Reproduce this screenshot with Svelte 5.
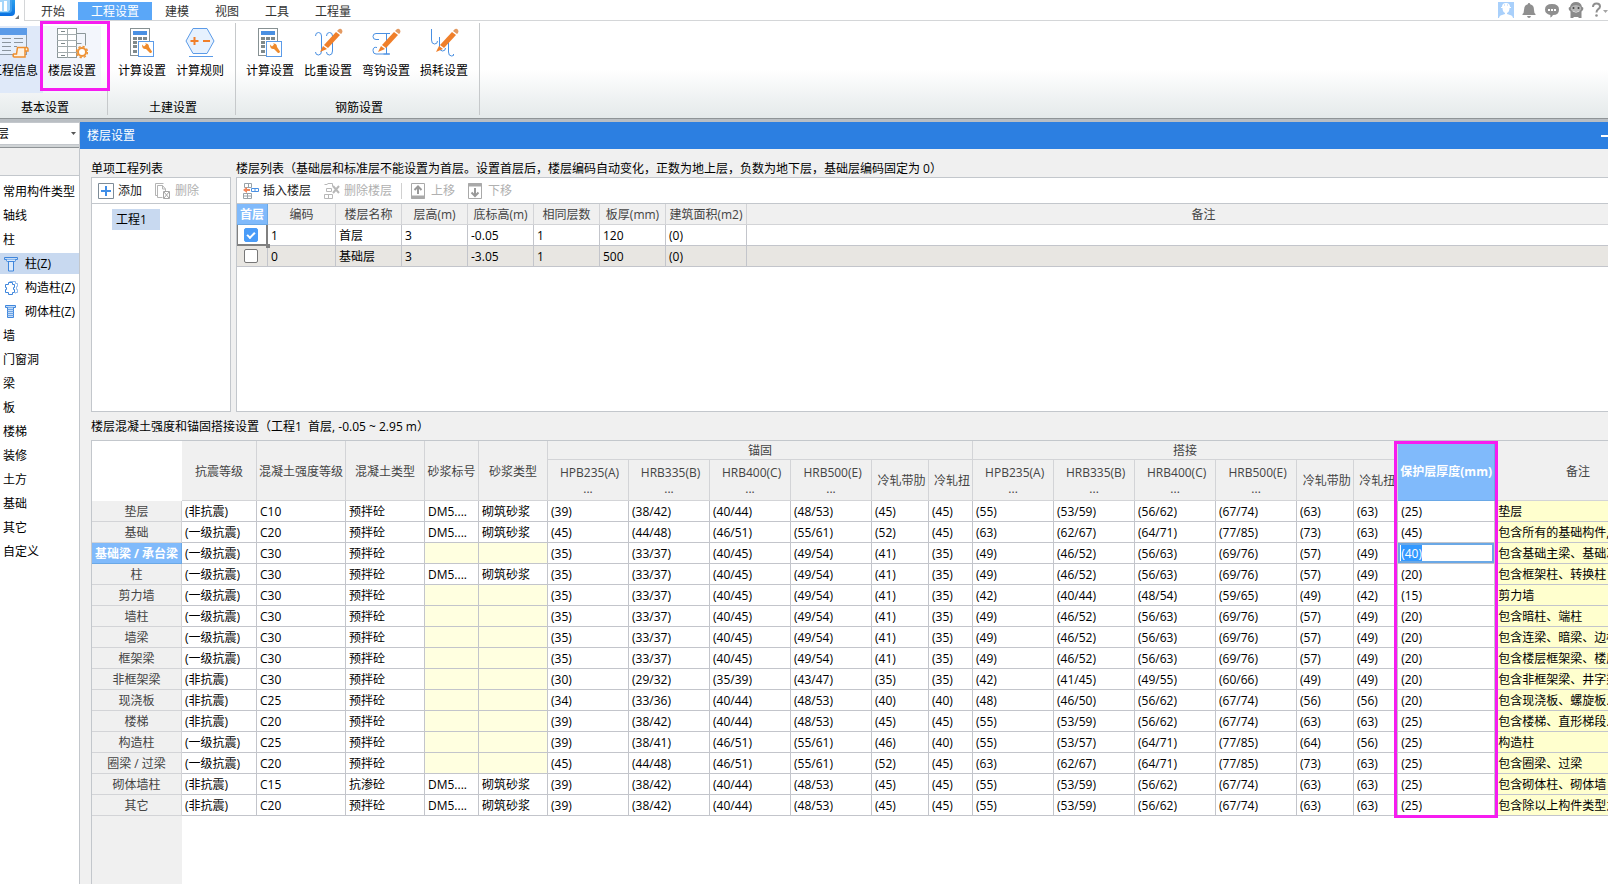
<script>
import { onMount } from 'svelte';

const tabs = ['开始', '工程设置', '建模', '视图', '工具', '工程量']

const groups = [
  { name: '基本设置', items: [['info', '工程信息'], ['floor', '楼层设置']] },
  { name: '土建设置', items: [['calc', '计算设置'], ['rule', '计算规则']] },
  { name: '钢筋设置', items: [['calc', '计算设置'], ['weight', '比重设置'], ['hook', '弯钩设置'], ['loss', '损耗设置']] },
]

const parts = [
  ['常用构件类型'], ['轴线'], ['柱'], ['柱(Z)', 'col'], ['构造柱(Z)', 'tie'], ['砌体柱(Z)', 'brick'],
  ['墙'], ['门窗洞'], ['梁'], ['板'], ['楼梯'], ['装修'], ['土方'], ['基础'], ['其它'], ['自定义'],
]

const floorHead = ['编码', '楼层名称', '层高(m)', '底标高(m)', '相同层数', '板厚(mm)', '建筑面积(m2)', '备注']
let floors = [
  { first: true, cells: ['1', '首层', '3', '-0.05', '1', '120', '(0)', ''] },
  { first: false, cells: ['0', '基础层', '3', '-3.05', '1', '500', '(0)', ''] },
]

const heads = ['抗震等级', '混凝土强度等级', '混凝土类型', '砂浆标号', '砂浆类型']
const bars = ['HPB235(A)', 'HRB335(B)', 'HRB400(C)', 'HRB500(E)', '冷轧带肋', '冷轧扭']
const widths = [90, 75, 89, 79, 54, 69, 81, 81, 81, 81, 57, 44, 81, 81, 81, 81, 57, 44, 97]

const A = '(非抗震)'
const B = '(一级抗震)'
const c30 = '35 33/37 40/45 49/54 41 35 49 46/52 56/63 69/76 57 49'
const c20 = '39 38/42 40/44 48/53 45 45 55 53/59 56/62 67/74 63 63'
const c20k = '45 44/48 46/51 55/61 52 45 63 62/67 64/71 77/85 73 63'

// name, seismic, grade, concrete, has mortar, lengths, cover, remark
const data = [
  ['垫层', A, 'C10', '预拌砼', 1, c20, 25, '垫层'],
  ['基础', B, 'C20', '预拌砼', 1, c20k, 45, '包含所有的基础构件, 不含基础梁'],
  ['基础梁 / 承台梁', B, 'C30', '预拌砼', 0, c30, 40, '包含基础主梁、基础次梁'],
  ['柱', B, 'C30', '预拌砼', 1, c30, 20, '包含框架柱、转换柱'],
  ['剪力墙', B, 'C30', '预拌砼', 0, '35 33/37 40/45 49/54 41 35 42 40/44 48/54 59/65 49 42', 15, '剪力墙'],
  ['墙柱', B, 'C30', '预拌砼', 0, c30, 20, '包含暗柱、端柱'],
  ['墙梁', B, 'C30', '预拌砼', 0, c30, 20, '包含连梁、暗梁、边框梁'],
  ['框架梁', B, 'C30', '预拌砼', 0, c30, 20, '包含楼层框架梁、楼层框支梁'],
  ['非框架梁', A, 'C30', '预拌砼', 0, '30 29/32 35/39 43/47 35 35 42 41/45 49/55 60/66 49 49', 20, '包含非框架梁、井字梁'],
  ['现浇板', A, 'C25', '预拌砼', 0, '34 33/36 40/44 48/53 40 40 48 46/50 56/62 67/74 56 56', 20, '包含现浇板、螺旋板...'],
  ['楼梯', A, 'C20', '预拌砼', 0, c20, 25, '包含楼梯、直形梯段...'],
  ['构造柱', B, 'C25', '预拌砼', 0, '39 38/41 46/51 55/61 46 40 55 53/57 64/71 77/85 64 56', 25, '构造柱'],
  ['圈梁 / 过梁', B, 'C20', '预拌砼', 0, c20k, 25, '包含圈梁、过梁'],
  ['砌体墙柱', A, 'C15', '抗渗砼', 1, c20, 25, '包含砌体柱、砌体墙'],
  ['其它', A, 'C20', '预拌砼', 1, c20, 25, '包含除以上构件类型之外'],
]

let cover = '(40)'
let edit

onMount(() => {
  edit.focus({ preventScroll: true })
  edit.select()
})
</script>

{#snippet pencil()}
  <path d="M12 18 L24 5 L28 8 L16 21 Z" fill="#f07f2a" />
  <path d="M25 4 L27 2 Q29 1 30 3 Q31 4 30 6 L29 7 Z" fill="#e39a62" />
  <path d="M11 19 L15 22 L8 25 Z" fill="#f07f2a" />
{/snippet}

{#snippet icon(name)}
  <svg class="big" viewBox="0 0 32 32" aria-hidden="true">
    {#if name === 'info'}
      <rect x="1.500" y="1.500" width="27" height="26" fill="#e6effc" stroke="#8e9aa6" />
      <rect x="1" y="1" width="28" height="7" fill="#5b9be8" />
      <path d="M4 11.500h9M4 15.500h9M4 19.500h9M4 23.500h9M16 11.500h9M16 15.500h9M16 19.500h3" stroke="#8b959e" />
      <path d="M19.500 20.500h9q1.500 0 1.500 2v1.500h-3v6h-11q-1.500-1-.5-3h3zM27 24v-3" fill="#fdf3e4" stroke="#ee8e2e" stroke-width="1.500" />
    {:else if name === 'floor'}
      <path d="M20.500 6.500h9v12M20.500 16.500h5" fill="none" stroke="#8c9799" />
      <rect x="1.500" y="1.500" width="19" height="29" fill="#fff" stroke="#8c9799" />
      <path d="M1 7.500h20M1 13.500h20M1 19.500h20M1 25.500h20M11.500 1v30" stroke="#a3acae" />
      <path d="M5 4.500h4M5 16.500h4M5 28.500h4" stroke="#7c8789" />
      <circle cx="26" cy="25" r="4" fill="#fff" stroke="#ee9337" stroke-width="2" />
      <circle cx="26" cy="25" r="5.500" fill="none" stroke="#ee9337" stroke-width="1.500" stroke-dasharray="2.300 2" />
    {:else if name === 'calc'}
      <rect x="4.500" y="1.500" width="19" height="27" fill="#fff" stroke="#879193" />
      <rect x="7" y="4" width="14" height="4" fill="#4a90e2" />
      <path d="M7 11.500h4M12 11.500h4M17 11.500h4M7 15.500h4M12 15.500h4M17 15.500h4M7 19.500h4M7 24.500h4" stroke="#7f898b" stroke-width="3" />
      <rect x="12.500" y="14.500" width="15" height="15" fill="#fff" stroke="#5b9be8" />
      <path d="M16 17.500l2 2 2-2-1-1q4-.5 4 3.500l3 4.500q-.5 2-2 1.500l-4-4q-4 .5-4-4.500z" fill="#ee8a2c" />
    {:else if name === 'rule'}
      <path d="M9 1.500h14l7 12.500-7 12.500H9L2 14z" fill="#e6f1fe" stroke="#5b9be8" />
      <path d="M6.500 14h8M10.500 10v8M19 14h7" stroke="#f07f2a" stroke-width="2" />
      <path d="M5 29.500h24" stroke="#5b9be8" />
    {:else if name === 'weight'}
      <path d="M3.500 9q0-3.500 3-3.500t3 3.500v15q0 4-3 4t-3-3M14.500 9q0-3.500 3-3.500t3 3.500v15q0 4-3 4t-3-3" fill="none" stroke="#4a90e2" />
      {@render pencil()}
    {:else if name === 'hook'}
      <path d="M20 6.500H6q-3 0-3 3t3 3h3M7 20.500q-4-1-4 3 0 3.500 3 3.500h14M16.500 7v20M13.500 6.500h6M13.500 27h6" fill="none" stroke="#4a90e2" />
      {@render pencil()}
    {:else}
      <path d="M3.500 2v11q0 4 3 4t3-3M11.500 10v10q0 4 3 4t3-3M20.500 14v11q0 4 3 4t2-2" fill="none" stroke="#4a90e2" />
      {@render pencil()}
    {/if}
  </svg>
{/snippet}

<div class="app">
  <header class="top">
    <svg class="logo" viewBox="0 0 24 20" aria-hidden="true">
      <defs>
        <linearGradient id="lg" x1="0" y1="0" x2="0" y2="1">
          <stop offset="0" stop-color="#2aa0ee" /><stop offset="1" stop-color="#0a6fe0" />
        </linearGradient>
      </defs>
      <path d="M0 0h15v12q0 4-4 4H0z" fill="url(#lg)" />
      <path d="M0 0h12v11l-2 2H0z" fill="#3f9fee" />
      <path d="M0 0h10v10l-2 2H0z" fill="#a5d6fa" />
      <path d="M0 2h2v9H0zM4 1h3v10H4z" fill="#fff" />
      <path d="M19 15v4h-4z" fill="#777" />
    </svg>
    <nav class="tabs">
      {#each tabs as tab, i}
        <button class="tab" class:on={i === 1}>{tab}</button>
      {/each}
    </nav>
    <div class="tools">
      <button aria-label="用户">
        <svg width="16" height="16" viewBox="0 0 16 16">
          <rect width="16" height="16" fill="#a9d0fb" />
          <path d="M3 5h10v1H3zM4 5q0-4 4-4t4 4zM4.500 6h7q0 4-2.500 5v1l4.500 1.500q1.500 1 1.500 2.500H1q0-1.500 1.500-2.500L7 12v-1Q4.500 10 4.500 6z" fill="#fff" />
          <path d="M6.500 2v2M9.500 2v2" stroke="#d4e7fd" />
        </svg>
      </button>
      <button aria-label="通知">
        <svg width="14" height="16" viewBox="0 0 14 16">
          <path d="M7 1q1.200 0 1.200 1.200Q12 3 12 8q0 3 1.500 4v1H.5v-1Q2 11 2 8q0-5 3.800-5.800Q5.800 1 7 1zM5 14h4q-.5 2-2 2t-2-2z" fill="#8f8f8f" />
        </svg>
      </button>
      <button aria-label="消息">
        <svg width="16" height="16" viewBox="0 0 16 16">
          <path d="M8 2q7 0 7 5.500T9 13q-1 2-3 2.500.8-1.500.3-2.600Q1 12 1 7.500 1 2 8 2z" fill="#8f8f8f" />
          <path d="M4 7h2v2H4zM7 7h2v2H7zM10 7h2v2h-2z" fill="#fff" />
        </svg>
      </button>
      <button aria-label="助手">
        <svg width="16" height="17" viewBox="0 0 16 17">
          <path d="M8 0q5 0 6 5 2 0 1 3l-1.500 1.500v6.500h-3v-1h-5v1h-3V9.500L1 8Q0 5 2 5q1-5 6-5z" fill="#8a8a8a" />
          <path d="M3 5q5-4 10 0v3q-5 3-10 0z" fill="#b5b5b5" />
          <circle cx="5.500" cy="6" r="1" fill="#444" /><circle cx="10.500" cy="6" r="1" fill="#444" />
          <path d="M4.500 9q3.500 2.500 7 0" fill="none" stroke="#ddd" />
        </svg>
      </button>
      <button aria-label="帮助">
        <svg width="16" height="16" viewBox="0 0 16 16">
          <path d="M1 5q0-3.500 3.500-3.500T8 4.500q0 1.500-2 2.800-1.500 1-1.500 3.200" fill="none" stroke="#8f8f8f" stroke-width="2" />
          <circle cx="4.500" cy="13.500" r="1.300" fill="#8f8f8f" />
          <path d="M11 8h5l-2.500 3z" fill="#a5a5a5" />
        </svg>
      </button>
    </div>
  </header>

  <div class="ribbon">
    {#each groups as g}
      <section class="group">
        <div class="row">
          {#each g.items as [ic, label]}
            <button class="cmd" class:info={ic === 'info'} class:floor={ic === 'floor'}>
              {@render icon(ic)}
              <span>{label}</span>
              {#if ic === 'floor'}<i class="mark"></i>{/if}
            </button>
          {/each}
        </div>
        <h2>{g.name}</h2>
      </section>
    {/each}
  </div>

  <div class="body">
    <aside>
      <div class="combo">
        <select aria-label="楼层"><option>首层</option></select>
        <svg width="5" height="3" viewBox="0 0 5 3" aria-hidden="true"><path d="M0 0h5L2.500 3z" fill="#555" /></svg>
      </div>
      <div class="strip"></div>
      <ul>
        {#each parts as [name, ic]}
          <li class:sel={ic === 'col'} class:sub={ic}>
            {#if ic}
              <svg width="14" height="16" viewBox="0 0 14 16" fill="none" stroke="#3f86dc" aria-hidden="true">
                {#if ic === 'col'}
                  <path d="M.5 1.500h13v2H.5z" fill="#c4dcf8" />
                  <path d="M2.500 3.500v1q0 1 1 1h7q1 0 1-1v-1M4.500 5.500v9.500h5V5.500" fill="#dceafb" />
                {:else if ic === 'tie'}
                  <path d="M5.500 1.500h6v2h2v3h-1v3h1v3h-2v1" stroke="#8fb9ec" />
                  <path d="M4.500 2.500h4v2h2v3h-1v2h1v3h-2v2h-4v-2h-3v-3h1v-2h-1v-3h3z" />
                {:else}
                  <path d="M1.500 1.500h10v2h-10z" fill="#c4dcf8" />
                  <path d="M3.500 3.500v10h6v-10" fill="#c4dcf8" />
                  <path d="M3.500 5.500h6M3.500 7.500h6M3.500 9.500h6M3.500 11.500h6" stroke="#6ea4e4" />
                {/if}
              </svg>
            {/if}
            <a href="#{name}">{name}</a>
          </li>
        {/each}
      </ul>
    </aside>

    <main>
      <div class="title">
        <h1>楼层设置</h1>
        <button aria-label="最小化"></button>
      </div>

      <div class="content">
        <div class="upper">
          <section class="projects">
            <h3>单项工程列表</h3>
            <div class="box">
              <div class="bar">
                <button>
                  <svg width="16" height="16" viewBox="0 0 16 16"><path d="M.5.5h15v15H.5z" fill="#fff" stroke="#7d8b97" /><path d="M8 3v10M3 8h10" stroke="#3f8ee8" stroke-width="2" /></svg>
                  添加
                </button>
                <button disabled>
                  <svg width="16" height="16" viewBox="0 0 16 16" fill="none" stroke="#b4b4b4"><path d="M2.500 12.500h-2V.5h8M10.500 8V6l-3-3.500h-5v12h5M7.500 2.500V6h3" /><path d="M8.500 8.500h6v7h-6zM9 9l5 6M14 9l-5 6" stroke="#a5a5a5" /></svg>
                  删除
                </button>
              </div>
              <div class="tree"><button>工程1</button></div>
            </div>
          </section>

          <section class="floors">
            <h3>楼层列表（基础层和标准层不能设置为首层。设置首层后，楼层编码自动变化，正数为地上层，负数为地下层，基础层编码固定为 0）</h3>
            <div class="box">
              <div class="bar">
                <button>
                  <svg width="16" height="16" viewBox="0 0 16 16" fill="none"><path d="M1.500.5h7v4h-7zM5.500.5v4M.5 10.500h8v5h-8zM4.500 10.500v5M.5 13h8" stroke="#98a2a8" /><path d="M8.500 5.500h7v3h-7zM12 5.500v3" stroke="#4a90e2" /><path d="M1 7h6" stroke="#f2855a" stroke-width="2" /><path d="M0 7l4-3v6z" fill="#f2855a" /></svg>
                  插入楼层
                </button>
                <button disabled>
                  <svg width="16" height="16" viewBox="0 0 16 16" fill="none" stroke="#b8b8b8"><path d="M.5 1.500h3M3.500.5h5v3M2.500 5.500h5v3h-5zM.5 11.500h8v4h-8zM4.500 11.500v4" /><path d="M9 3l6 7M15 3l-6 7" stroke-width="2" /></svg>
                  删除楼层
                </button>
                <span class="sep"></span>
                <button disabled>
                  <svg width="14" height="16" viewBox="0 0 14 16" fill="none" stroke="#a9a9a9"><path d="M.5.5h13v15H.5z" /><path d="M0 14h14" stroke-width="3" /><path d="M7 11V3.500M3.500 7L7 3.500 10.500 7" stroke-width="2" stroke="#999" /></svg>
                  上移
                </button>
                <button disabled>
                  <svg width="14" height="16" viewBox="0 0 14 16" fill="none" stroke="#a9a9a9"><path d="M.5.5h13v15H.5z" /><path d="M0 2h14" stroke-width="3" /><path d="M7 5v8M3.500 9.500L7 13l3.500-3.500" stroke-width="2" stroke="#999" /></svg>
                  下移
                </button>
              </div>
              <table class="list">
                <colgroup>
                  <col class="w31" /><col class="w68" /><col class="w66" /><col class="w66" /><col class="w66" /><col class="w66" /><col class="w66" /><col class="w81" /><col />
                </colgroup>
                <thead>
                  <tr>
                    <th class="hot">首层</th>
                    {#each floorHead as h}<th>{h}</th>{/each}
                  </tr>
                </thead>
                <tbody>
                  {#each floors as f, i}
                    <tr class:alt={i === 1}>
                      <td class="chk" class:cur={i === 0}><input type="checkbox" aria-label="首层" bind:checked={f.first} /></td>
                      {#each f.cells as c}<td>{c}</td>{/each}
                    </tr>
                  {/each}
                </tbody>
              </table>
            </div>
          </section>
        </div>

        <h3 class="sub-title">楼层混凝土强度和锚固搭接设置（工程1&nbsp; 首层, -0.05 ~ 2.95 m）</h3>
        <div class="grid">
          <table>
            <colgroup>
              {#each widths as w}<col style="width: {w}px" />{/each}
              <col />
            </colgroup>
            <thead>
              <tr class="h1">
                <th rowspan="2" class="corner"></th>
                {#each heads as h}<th rowspan="2">{h}</th>{/each}
                <th colspan="6">锚固</th>
                <th colspan="6">搭接</th>
                <th rowspan="2" class="hot cover">保护层厚度(mm)<i class="mark"></i></th>
                <th rowspan="2">备注</th>
              </tr>
              <tr class="h2">
                {#each [...bars, ...bars] as b}
                  <th>&nbsp;{b}{#if b[0] === 'H'}<br />...{/if}</th>
                {/each}
              </tr>
            </thead>
            <tbody>
              {#each data as [name, seismic, grade, kind, mortar, lens, cov, remark], i}
                <tr>
                  <th class:hot={i === 2}>{name}</th>
                  <td>{seismic}</td>
                  <td>{grade}</td>
                  <td>{kind}</td>
                  <td class:off={!mortar}>{mortar ? 'DM5....' : ''}</td>
                  <td class:off={!mortar}>{mortar ? '砌筑砂浆' : ''}</td>
                  {#each lens.split(' ') as l}<td>({l})</td>{/each}
                  {#if i === 2}
                    <td class="edit"><input aria-label="保护层厚度" bind:this={edit} bind:value={cover} /></td>
                  {:else}
                    <td>({cov})</td>
                  {/if}
                  <td class="remark">{remark}</td>
                </tr>
              {/each}
            </tbody>
          </table>
          <div class="gutter"></div>
        </div>
      </div>
    </main>
  </div>
</div>

<style>
  :global(body) {
    background: #f0f0f0;
    overflow: hidden;
  }
  .app {
    display: flex;
    flex-direction: column;
    min-height: 100vh;
    overflow: hidden;
    font: 12px/16px 'Open Sans', 'Noto Sans CJK SC', sans-serif;
    color: #000;
  }
  button, select, input {
    font: inherit;
    color: inherit;
    border: 0;
    padding: 0;
    margin: 0;
    background: none;
  }
  h1, h2, h3 {
    margin: 0;
    font-size: 12px;
    font-weight: normal;
  }
  svg {
    display: block;
    flex: none;
  }

  .top {
    display: flex;
    height: 21px;
    background: #fff;
  }
  .logo {
    width: 24px;
    height: 20px;
  }
  .tabs {
    display: flex;
    flex: 1;
    padding: 2px 0 0 3px;
    border-left: 1px solid #d4d6d8;
    border-bottom: 1px solid #d4d6d8;
  }
  .tab {
    padding: 1px 13px 0;
    color: #333;
  }
  .tab.on {
    background: #5aa7f8;
    color: #fff;
  }
  .tools {
    display: flex;
    align-items: center;
    gap: 8px;
    border-bottom: 1px solid #d4d6d8;
  }

  .ribbon {
    display: flex;
    height: 97px;
    padding-right: 20px;
    margin-left: -20px;
    background: linear-gradient(#fff 50%, #e4e9ea);
    border-bottom: 1px solid #8f9497;
    box-shadow: 0 3px #b9bec3;
    margin-bottom: 3px;
  }
  .group {
    margin: 2px 0 3px;
    padding: 3px 6px 0 5px;
    border-right: 1px solid #c6c9cb;
    text-align: center;
  }
  .group h2 {
    padding-left: 4px;
  }
  .row {
    display: flex;
    padding-bottom: 7px;
  }
  .cmd {
    position: relative;
    display: flex;
    flex-direction: column;
    align-items: center;
    width: 58px;
    height: 67px;
    padding-top: 1px;
  }
  .big {
    width: 32px;
    height: 32px;
    margin-bottom: 4px;
  }
  .info {
    background: #dfe9f9;
  }
  .floor {
    background: #f3f6fc;
  }
  .mark {
    position: absolute;
    z-index: 2;
    border: 3px solid #f61cf0;
    pointer-events: none;
  }
  .cmd .mark {
    inset: -5px -9px 2px -3px;
  }

  .body {
    display: flex;
    flex: 1;
  }
  aside {
    width: 79px;
    flex: none;
    background: #fff;
    border-right: 1px solid #c3c7cc;
  }
  .combo {
    position: relative;
    display: flex;
    margin-left: -21px;
    border: 1px solid #c3c7cc;
    border-right: 0;
  }
  .combo select {
    appearance: none;
    flex: 1;
    height: 21px;
    padding-left: 5px;
    background: #fff;
  }
  .combo svg {
    position: absolute;
    right: 3px;
    top: 9px;
  }
  .strip {
    height: 27px;
    border-top: 1px solid #8f9497;
    border-bottom: 1px solid #c3c7cc;
    background: #f0f0f0;
    box-shadow: 0 -2px #d0d4d6;
    margin-top: 2px;
  }
  ul {
    display: flex;
    flex-direction: column;
    gap: 3px;
    margin: 0;
    padding: 5px 0 0;
    list-style: none;
  }
  li {
    display: flex;
    align-items: center;
    gap: 7px;
    height: 21px;
    padding-left: 3px;
    white-space: nowrap;
  }
  li.sub {
    padding-left: 4px;
  }
  li.sel {
    background: #c8d9f0;
  }
  a {
    color: inherit;
    text-decoration: none;
  }

  /* the dialog runs past the right edge of the window */
  main {
    display: flex;
    flex-direction: column;
    flex: 1;
    min-width: 0;
    margin-right: -54px;
  }
  .title {
    display: flex;
    align-items: center;
    justify-content: space-between;
    height: 27px;
    padding: 0 49px 0 7px;
    background: #2c7fe1;
    color: #fff;
  }
  .title button {
    width: 12px;
    height: 2px;
    background: #fff;
  }
  .content {
    display: flex;
    flex-direction: column;
    flex: 1;
    padding: 9px 0 0 11px;
  }
  .upper {
    display: flex;
    gap: 5px;
    height: 254px;
  }
  .upper section {
    display: flex;
    flex-direction: column;
  }
  h3 {
    padding-top: 2px;
    line-height: 17px;
    white-space: nowrap;
  }
  .projects {
    width: 140px;
  }
  .floors {
    flex: 1;
    min-width: 0;
  }
  .box {
    flex: 1;
    background: #fff;
    border: 1px solid #c3c7cc;
  }
  .bar {
    display: flex;
    align-items: center;
    height: 25px;
    border-bottom: 1px solid #c3c7cc;
  }
  .bar button {
    display: flex;
    align-items: center;
    gap: 4px;
    padding: 0 7px 0 6px;
    color: #222;
  }
  .bar button:disabled {
    color: #b0b0b0;
  }
  .sep {
    width: 1px;
    height: 16px;
    margin: 0 3px 0 2px;
    background: #d0d0d0;
  }
  .sep ~ button {
    gap: 6px;
  }
  .tree {
    padding: 5px 20px;
  }
  .tree button {
    width: 48px;
    height: 21px;
    padding-left: 4px;
    text-align: left;
    background: #c8d9f0;
  }

  table {
    width: 100%;
    table-layout: fixed;
    border-collapse: separate;
    border-spacing: 0;
  }
  th, td {
    box-sizing: border-box;
    height: 21px;
    padding: 2px 0 0;
    border-right: 1px solid #c3c5cb;
    border-bottom: 1px solid #c3c5cb;
    white-space: nowrap;
  }
  th {
    font-weight: normal;
    color: #444;
    background: #f0f0f0;
    border-color: #d3d4d7;
  }
  td {
    padding-left: 3px;
    overflow: hidden;
    background: #fff;
  }
  th.hot {
    color: #fff;
    font-weight: bold;
    background: #80bafb;
    border-color: #6aa8e6;
  }
  .w31 { width: 31px; }
  .w66 { width: 66px; }
  .w68 { width: 68px; }
  .w81 { width: 81px; }
  .alt td {
    background: #e8e6e2;
  }
  .chk {
    padding: 0 0 0 7px;
  }
  .cur {
    position: relative;
    overflow: visible;
    padding-left: 6px;
    border: solid #808080;
    border-width: 0 2px 2px 1px;
  }
  .cur::after {
    content: '';
    position: absolute;
    right: -4px;
    bottom: -4px;
    width: 4px;
    height: 4px;
    background: #808080;
  }
  .chk input {
    appearance: none;
    display: block;
    box-sizing: border-box;
    width: 14px;
    height: 14px;
    border: 1px solid #777;
    border-radius: 2px;
    background: #fff;
  }
  .chk input:checked {
    border-color: #4a9cf8;
    background: #4a9cf8;
  }
  .chk input:checked::after {
    content: '';
    display: block;
    width: 6px;
    height: 3px;
    margin: 3px 2px;
    border: solid #fff;
    border-width: 0 0 2px 2px;
    transform: rotate(-45deg);
  }

  .sub-title {
    line-height: 26px;
  }
  .grid {
    display: flex;
    flex-direction: column;
    flex: 1;
    background: #fff;
    border: solid #c3c7cc;
    border-width: 1px 0 0 1px;
  }
  .grid .corner {
    background: #fff;
    border-color: #fff;
  }
  .h1 th {
    height: 19px;
  }
  .h2 th {
    height: 41px;
  }
  .cover {
    position: relative;
  }
  .cover .mark {
    inset: 0 -4px -318px -4px;
  }
  .off {
    background: #ffffe0;
  }
  .remark {
    background: #ffffce;
  }
  .edit {
    padding: 0;
  }
  .edit input {
    display: block;
    box-sizing: border-box;
    width: 100%;
    height: 20px;
    padding-left: 1px;
    border: 2px solid #6aa8e6;
    outline: 0;
  }
  .edit input::selection {
    background: #3399ff;
    color: #fff;
  }
  .gutter {
    flex: 1;
    width: 90px;
    background: #f0f0f0;
  }
</style>
